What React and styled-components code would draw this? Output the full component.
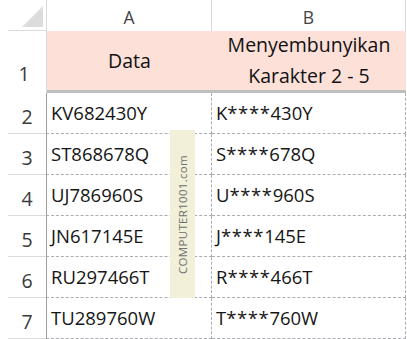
import React from "react";
import styled, { createGlobalStyle } from "styled-components";

const Global = createGlobalStyle`
  html, body { margin: 0; padding: 0; background: #fff; }
  body { font-family: "Open Sans", "Liberation Sans", Arial, sans-serif; }
`;

const Sheet = styled.div`
  position: relative;
  width: 407px;
  height: 339px;
  overflow: hidden;
  display: grid;
  grid-template-columns: 47px 165px 194px;
  grid-template-rows: 31px 62px repeat(6, 41px);
  background: #fff;
`;

const Corner = styled.div`
  position: relative;
  border-right: 1px solid #dadada;
  border-bottom: 1px solid #dadada;
  margin-left: 8px;
  &::after {
    content: "";
    position: absolute;
    right: 3px;
    bottom: 3px;
    width: 0;
    height: 0;
    border-left: 21px solid transparent;
    border-bottom: 21px solid #dcdcdc;
  }
`;

const ColHead = styled.div`
  display: flex;
  align-items: center;
  justify-content: center;
  font-size: 17.5px;
  color: #444;
  padding-top: 2px;
  border-right: 1px solid #dadada;
  box-sizing: border-box;
`;

const RowHead = styled.div`
  margin-left: 8px;
  display: flex;
  align-items: flex-end;
  justify-content: center;
  font-size: 19.5px;
  line-height: 26px;
  color: #3a3a3a;
  padding-bottom: ${(p) => (p.$first ? "6px" : "3px")};
  border-bottom: 1px solid #dcdcdc;
  border-right: 1px solid #9e9e9e;
  box-sizing: border-box;
  ${(p) => p.$first && "border-bottom: none; border-right-color: #dadada; padding-right: 6px;"}
`;

const HeadCell = styled.div`
  background: #fde1d9;
  border-bottom: 3px solid #bebebe;
  display: flex;
  align-items: center;
  justify-content: center;
  text-align: center;
  font-size: 19.5px;
  line-height: 31px;
  color: #111;
  box-sizing: border-box;
  padding-bottom: 1px;
`;

const Cell = styled.div`
  display: flex;
  align-items: center;
  padding-left: 4px;
  padding-bottom: 2px;
  font-size: 18.5px;
  color: #161616;
  border-bottom: 1px dashed #acacb4;
  border-right: 1px dashed #acacb4;
  box-sizing: border-box;
  ${(p) => !p.$b && "border-left: 1px solid #9e9e9e; margin-left: -1px;"}
`;

const Masked = styled.span`
  letter-spacing: 0.6px;
`;

const Watermark = styled.div`
  position: absolute;
  left: 170px;
  top: 130px;
  width: 25px;
  height: 168px;
  background: #f2f0d8;
  display: flex;
  align-items: center;
  justify-content: center;
`;

const WatermarkText = styled.span`
  transform: rotate(-90deg);
  white-space: nowrap;
  font-family: "Open Sans", "DejaVu Sans", sans-serif;
  font-size: 11.5px;
  letter-spacing: 0.3px;
  color: #707070;
`;

const rows = [
  ["KV682430Y", "K", "430Y"],
  ["ST868678Q", "S", "678Q"],
  ["UJ786960S", "U", "960S"],
  ["JN617145E", "J", "145E"],
  ["RU297466T", "R", "466T"],
  ["TU289760W", "T", "760W"],
];

export default function App() {
  return (
    <>
      <Global />
      <Sheet>
        <Corner />
        <ColHead>A</ColHead>
        <ColHead>B</ColHead>
        <RowHead $first>1</RowHead>
        <HeadCell>Data</HeadCell>
        <HeadCell>
          Menyembunyikan
          <br />
          Karakter 2 - 5
        </HeadCell>
        {rows.map((r, i) => (
          <React.Fragment key={i}>
            <RowHead>{i + 2}</RowHead>
            <Cell>{r[0]}</Cell>
            <Cell $b>
              {r[1]}
              <Masked>****</Masked>
              {r[2]}
            </Cell>
          </React.Fragment>
        ))}
        <Watermark>
          <WatermarkText>COMPUTER1001.com</WatermarkText>
        </Watermark>
      </Sheet>
    </>
  );
}
